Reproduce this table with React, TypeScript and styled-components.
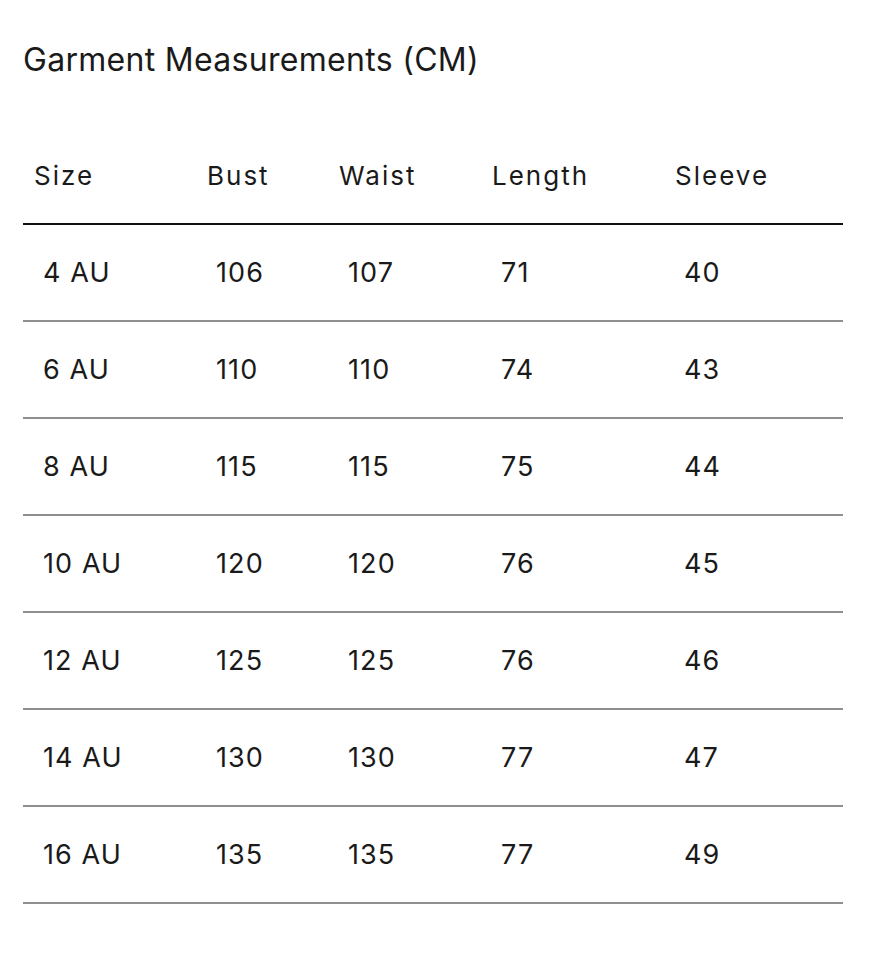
import React from "react";
import styled, { createGlobalStyle } from "styled-components";

const GlobalStyle = createGlobalStyle`
  html, body {
    margin: 0;
    padding: 0;
    background: #ffffff;
  }
  body {
    font-family: Inter, "Noto Sans", "Liberation Sans", sans-serif;
    color: #1a1a1a;
  }
`;

const COLUMNS = "173px 132px 153px 183px 1fr";

const rows = [
  ["4 AU", "106", "107", "71", "40"],
  ["6 AU", "110", "110", "74", "43"],
  ["8 AU", "115", "115", "75", "44"],
  ["10 AU", "120", "120", "76", "45"],
  ["12 AU", "125", "125", "76", "46"],
  ["14 AU", "130", "130", "77", "47"],
  ["16 AU", "135", "135", "77", "49"],
];

const headers = ["Size", "Bust", "Waist", "Length", "Sleeve"];

const App = () => {
  return (
    <>
      <GlobalStyle />
      <Page>
        <Title>Garment Measurements (CM)</Title>
        <Table>
          <HeadRow>
            {headers.map((h) => (
              <HeadCell key={h}>{h}</HeadCell>
            ))}
          </HeadRow>
          {rows.map((row) => (
            <BodyRow key={row[0]}>
              {row.map((value, i) => (
                <BodyCell key={i}>{value}</BodyCell>
              ))}
            </BodyRow>
          ))}
        </Table>
      </Page>
    </>
  );
};

export default App;

const Page = styled.div`
  width: 820px;
  padding: 40px 0 0 23px;
`;

const Title = styled.h1`
  margin: 0;
  font-size: 32px;
  font-weight: 400;
  line-height: 40px;
  letter-spacing: 0.3px;
  color: #1a1a1a;
`;

const Table = styled.div`
  margin-top: 48px;
  display: flex;
  flex-direction: column;
`;

const HeadRow = styled.div`
  display: grid;
  grid-template-columns: ${COLUMNS};
  align-items: center;
  height: 95px;
  border-bottom: 2px solid #111111;
`;

const BodyRow = styled.div`
  display: grid;
  grid-template-columns: ${COLUMNS};
  align-items: center;
  height: 95px;
  border-bottom: 2px solid #8f8f8f;
`;

const HeadCell = styled.div`
  padding-left: 11px;
  font-size: 26px;
  font-weight: 400;
  letter-spacing: 2px;
`;

const BodyCell = styled.div`
  padding-left: 20px;
  font-size: 27px;
  font-weight: 400;
  letter-spacing: 1.1px;
`;
